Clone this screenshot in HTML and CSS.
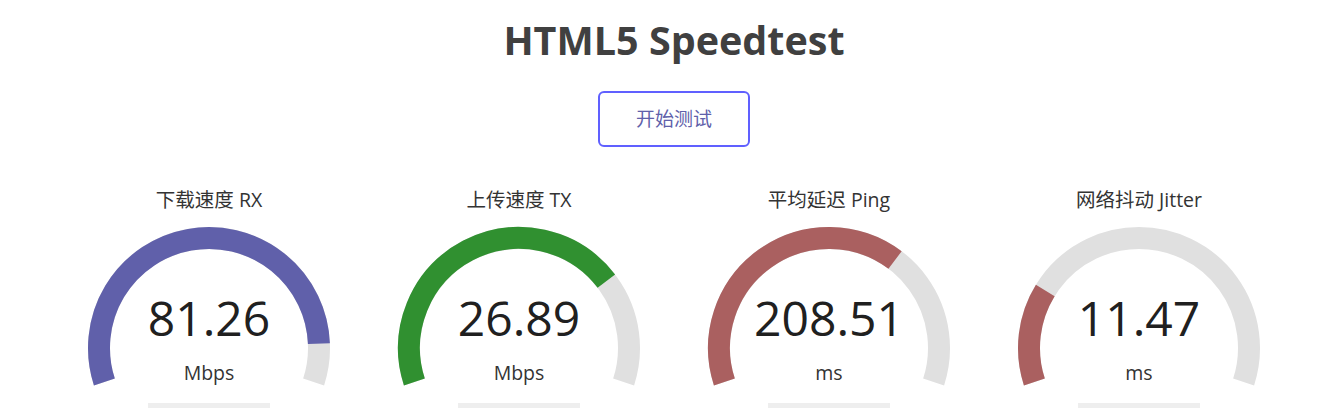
FILE: index.html
```html
<!DOCTYPE html>
<html lang="zh-CN">
<head>
<meta charset="utf-8">
<title>HTML5 Speedtest</title>
<link rel="stylesheet" href="styles.css">
</head>
<body>
<div class="page">
  <h1 class="title">HTML5 Speedtest</h1>
  <div class="btn-row"><button class="start-btn">开始测试</button></div>
  <div class="gauges">
    <div class="gauge">
      <div class="gauge-name">下载速度 RX</div>
      <div class="gauge-body">
        <svg class="meter" width="310" height="190" viewBox="0 0 310 190">
          <path class="arc-bg" d="M50.38 163.99 A110 110 0 1 1 259.62 163.99"/>
          <path class="arc-fg dl" d="M50.38 163.99 A110 110 0 1 1 264.91 125.60"/>
          <rect class="prog" x="94" y="185" width="122" height="5"/>
        </svg>
        <div class="readout">
          <div class="value">81.26</div>
          <div class="unit">Mbps</div>
        </div>
      </div>
    </div>
    <div class="gauge">
      <div class="gauge-name">上传速度 TX</div>
      <div class="gauge-body">
        <svg class="meter" width="310" height="190" viewBox="0 0 310 190">
          <path class="arc-bg" d="M50.38 163.99 A110 110 0 1 1 259.62 163.99"/>
          <path class="arc-fg ul" d="M50.38 163.99 A110 110 0 0 1 242.37 63.17"/>
          <rect class="prog" x="94" y="185" width="122" height="5"/>
        </svg>
        <div class="readout">
          <div class="value">26.89</div>
          <div class="unit">Mbps</div>
        </div>
      </div>
    </div>
    <div class="gauge">
      <div class="gauge-name">平均延迟 Ping</div>
      <div class="gauge-body">
        <svg class="meter" width="310" height="190" viewBox="0 0 310 190">
          <path class="arc-bg" d="M50.38 163.99 A110 110 0 1 1 259.62 163.99"/>
          <path class="arc-fg lat" d="M50.38 163.99 A110 110 0 0 1 221.06 42.04"/>
          <rect class="prog" x="94" y="185" width="122" height="5"/>
        </svg>
        <div class="readout">
          <div class="value">208.51</div>
          <div class="unit">ms</div>
        </div>
      </div>
    </div>
    <div class="gauge">
      <div class="gauge-name">网络抖动 Jitter</div>
      <div class="gauge-body">
        <svg class="meter" width="310" height="190" viewBox="0 0 310 190">
          <path class="arc-bg" d="M50.38 163.99 A110 110 0 1 1 259.62 163.99"/>
          <path class="arc-fg lat" d="M50.38 163.99 A110 110 0 0 1 61.27 72.43"/>
          <rect class="prog" x="94" y="185" width="122" height="5"/>
        </svg>
        <div class="readout">
          <div class="value">11.47</div>
          <div class="unit">ms</div>
        </div>
      </div>
    </div>
  </div>
</div>
</body>
</html>
```

FILE: styles.css
```css
html, body {
  margin: 0;
  padding: 0;
  background: #ffffff;
}
body {
  font-family: "Open Sans", "Noto Sans CJK SC", sans-serif;
  color: #333333;
}
.page {
  padding-left: 7px;
}
.title {
  margin: 16px 0 0 0;
  font-size: 39.5px;
  line-height: 48px;
  font-weight: 700;
  color: #404040;
  text-align: center;
}
.btn-row {
  display: flex;
  justify-content: center;
  margin-top: 27px;
}
.start-btn {
  width: 152px;
  height: 56px;
  box-sizing: border-box;
  border: 2px solid #6060ff;
  border-radius: 6px;
  background: #ffffff;
  color: #6060aa;
  font-family: "Open Sans", "Noto Sans CJK SC", sans-serif;
  font-size: 19px;
  line-height: 52px;
  padding: 0;
}
.gauges {
  display: flex;
  justify-content: center;
  margin-top: 41px;
}
.gauge {
  width: 310px;
  display: flex;
  flex-direction: column;
  align-items: center;
}
.gauge-name {
  font-size: 19.5px;
  line-height: 24px;
  color: #333333;
}
.gauge-body {
  display: grid;
  margin-top: 6px;
  width: 310px;
  height: 190px;
}
.meter,
.readout {
  grid-area: 1 / 1;
}
.meter {
  display: block;
}
.arc-bg,
.arc-fg {
  fill: none;
  stroke-width: 22;
  stroke-linecap: butt;
}
.arc-bg { stroke: #e0e0e0; }
.arc-fg.dl { stroke: #6060aa; }
.arc-fg.ul { stroke: #309030; }
.arc-fg.lat { stroke: #aa6060; }
.prog { fill: #eeeeee; }
.readout {
  display: flex;
  flex-direction: column;
  align-items: center;
  padding-top: 76px;
}
.value {
  font-size: 48px;
  line-height: 48px;
  color: #202020;
}
.unit {
  margin-top: 21px;
  font-size: 19.5px;
  line-height: 20px;
  color: #333333;
}
```
